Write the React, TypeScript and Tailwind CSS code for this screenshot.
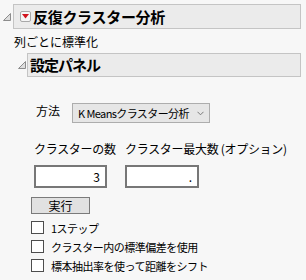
import React from 'react';

const Disclosure = () => (
  <svg width="8" height="8" viewBox="0 0 8 8" className="shrink-0">
    <polygon points="7.5,0.5 7.5,7.5 0.5,7.5" fill="#dedede" stroke="#8c8c8c" strokeWidth="1" />
  </svg>
);

const RedMenu = () => (
  <div className="w-[11px] h-[11px] shrink-0 rounded-[2px] border border-[#a8a8a8] bg-[#f6f6f6] flex items-center justify-center">
    <svg width="7" height="5" viewBox="0 0 7 5">
      <polygon points="0,0 7,0 3.5,4.5" fill="#d2141e" />
    </svg>
  </div>
);

const Check = ({ label }: { label: string }) => (
  <div className="flex items-center h-[19px] pl-[31px]">
    <div className="w-[13px] h-[13px] border border-[#4d4d4d] bg-white shrink-0" />
    <span className="ml-[7px] text-[11px] leading-[14px] tracking-[-0.5px] whitespace-nowrap">{label}</span>
  </div>
);

export default function App() {
  return (
    <div className="w-[306px] h-[280px] overflow-hidden bg-[#f7f7f7] text-black font-['Noto_Sans_CJK_JP',sans-serif]">
      {/* Outline header */}
      <div className="flex items-center pt-[4px] pl-[3px]">
        <Disclosure />
        <div className="ml-[2px] w-[288px] h-[25px] bg-[#ebebeb] border border-[#c4c4c4] flex items-center pl-[6px]">
          <RedMenu />
          <span className="ml-[2px] text-[15px] font-bold leading-[18px] tracking-[-0.3px]">反復クラスター分析</span>
        </div>
      </div>

      <div className="mt-[5px] pl-[14px] text-[12px] leading-[16px]">列ごとに標準化</div>

      {/* Settings panel */}
      <div className="mt-[3px] flex items-center pl-[18px]">
        <Disclosure />
        <div className="ml-[1px] w-[274px] h-[24px] bg-[#ebebeb] border border-[#c4c4c4] flex items-center pl-[2px]">
          <span className="text-[15px] font-bold leading-[18px] tracking-[-1px]">設定パネル</span>
        </div>
      </div>

      <div className="mt-[26px] flex items-center pl-[36px]">
        <span className="text-[12px] leading-[16px] -mt-[5px]">方法</span>
        <div className="ml-[12px] w-[138px] h-[20px] bg-[#e6e6e6] border border-[#adadad] flex items-center justify-between pl-[5px] pr-[5px]">
          <span className="text-[11px] leading-[14px] tracking-[-0.6px] whitespace-nowrap">K Meansクラスター分析</span>
          <svg width="7" height="5" viewBox="0 0 7 5" className="shrink-0">
            <polyline points="0.5,0.8 3.5,3.8 6.5,0.8" fill="none" stroke="#7a7a7a" strokeWidth="1" />
          </svg>
        </div>
      </div>

      <div className="mt-[18px] flex pl-[34px] text-[12px] leading-[16px] whitespace-nowrap">
        <span className="w-[91px] tracking-[-0.3px]">クラスターの数</span>
        <span className="tracking-[-0.3px]">クラスター最大数 (オプション)</span>
      </div>

      <div className="mt-[8px] flex pl-[34px] gap-[18px]">
        <div className="w-[73px] h-[23px] bg-white border-2 border-[#777777] flex items-center justify-end pr-[5px] text-[12px]">3</div>
        <div className="w-[74px] h-[23px] bg-white border-2 border-[#777777] flex items-center justify-end pr-[5px] text-[12px]">.</div>
      </div>

      <div className="mt-[9px] ml-[31px] w-[59px] h-[17px] bg-[#e1e1e1] border border-[#7a7a7a] flex items-center justify-center text-[12px] leading-[14px]">
        実行
      </div>

      <div className="mt-[4px]">
        <Check label="1ステップ" />
        <Check label="クラスター内の標準偏差を使用" />
        <Check label="標本抽出率を使って距離をシフト" />
      </div>
    </div>
  );
}
